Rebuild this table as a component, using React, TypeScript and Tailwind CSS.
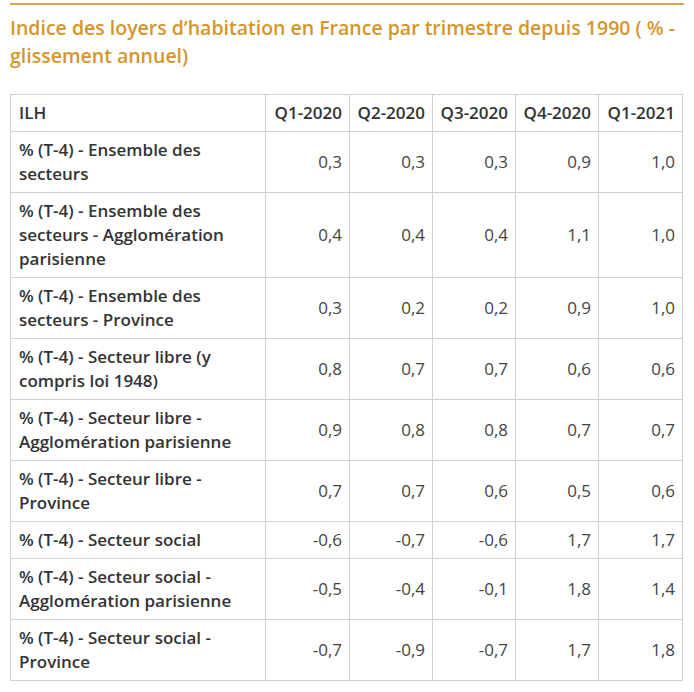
const rows: { label: string; values: string[] }[] = [
  { label: '% (T-4) - Ensemble des secteurs', values: ['0,3', '0,3', '0,3', '0,9', '1,0'] },
  { label: '% (T-4) - Ensemble des secteurs - Agglomération parisienne', values: ['0,4', '0,4', '0,4', '1,1', '1,0'] },
  { label: '% (T-4) - Ensemble des secteurs - Province', values: ['0,3', '0,2', '0,2', '0,9', '1,0'] },
  { label: '% (T-4) - Secteur libre (y compris loi 1948)', values: ['0,8', '0,7', '0,7', '0,6', '0,6'] },
  { label: '% (T-4) - Secteur libre - Agglomération parisienne', values: ['0,9', '0,8', '0,8', '0,7', '0,7'] },
  { label: '% (T-4) - Secteur libre - Province', values: ['0,7', '0,7', '0,6', '0,5', '0,6'] },
  { label: '% (T-4) - Secteur social', values: ['-0,6', '-0,7', '-0,6', '1,7', '1,7'] },
  { label: '% (T-4) - Secteur social - Agglomération parisienne', values: ['-0,5', '-0,4', '-0,1', '1,8', '1,4'] },
  { label: '% (T-4) - Secteur social - Province', values: ['-0,7', '-0,9', '-0,7', '1,7', '1,8'] },
];

const quarters = ['Q1-2020', 'Q2-2020', 'Q3-2020', 'Q4-2020', 'Q1-2021'];

export default function App() {
  return (
    <div className="min-h-screen bg-white px-[10px] pt-[3px] font-['Open_Sans',sans-serif] text-[#333]">
      <div className="border-t-2 border-[#d8a550]" />
      <h2 className="mt-[9px] text-[19.5px] font-semibold leading-[27.5px] text-[#d4962c]">
        Indice des loyers d’habitation en France par trimestre depuis 1990 ( % - glissement annuel)
      </h2>
      <table className="mt-[25px] w-[672px] table-fixed border-collapse text-[17px] leading-[24px]">
        <colgroup>
          <col className="w-[255px]" />
          <col className="w-[84px]" />
          <col className="w-[83px]" />
          <col className="w-[83px]" />
          <col className="w-[83px]" />
          <col className="w-[84px]" />
        </colgroup>
        <thead>
          <tr>
            <th className="border border-[#d0d0d0] px-[8px] py-[6px] text-left font-semibold">ILH</th>
            {quarters.map((q) => (
              <th key={q} className="border border-[#d0d0d0] px-[7px] py-[6px] text-right font-semibold whitespace-nowrap">
                {q}
              </th>
            ))}
          </tr>
        </thead>
        <tbody>
          {rows.map((r) => (
            <tr key={r.label}>
              <td className="border border-[#d0d0d0] px-[8px] py-[6px] font-semibold">{r.label}</td>
              {r.values.map((v, i) => (
                <td key={i} className="border border-[#d0d0d0] px-[7px] py-[6px] text-right font-normal text-[#444]">
                  {v}
                </td>
              ))}
            </tr>
          ))}
        </tbody>
      </table>
    </div>
  );
}
